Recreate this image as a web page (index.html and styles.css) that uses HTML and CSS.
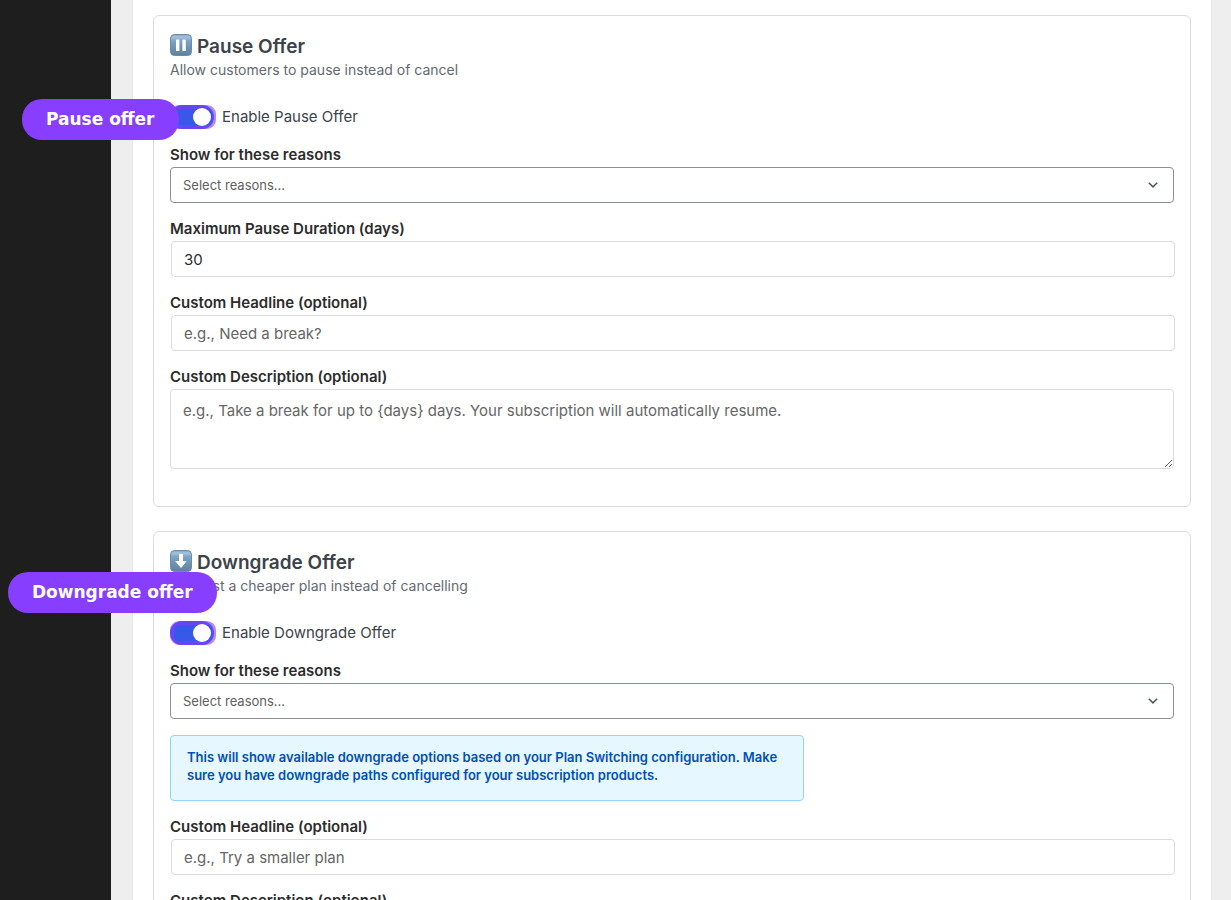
FILE: index.html
```html
<!DOCTYPE html>
<html lang="en">
<head>
    <meta charset="UTF-8">
    <meta name="viewport" content="width=device-width, initial-scale=1.0">
    <title>Retention Offers</title>
    <link rel="stylesheet" href="styles.css">
</head>
<body>
    <div class="layout">
        <aside class="sidebar"></aside>
        <main class="content">
            <form class="panel">
                <section class="offer-card">
                    <span class="callout callout-pause">Pause offer</span>
                    <h2>
                        <svg class="offer-icon" viewBox="0 0 22 22" aria-hidden="true">
                            <defs>
                                <linearGradient id="tile" x1="0" y1="0" x2="0" y2="1">
                                    <stop offset="0" stop-color="#7fa3c4"/>
                                    <stop offset="0.12" stop-color="#a5c4de"/>
                                    <stop offset="0.3" stop-color="#7fa3c3"/>
                                    <stop offset="1" stop-color="#5f7f9e"/>
                                </linearGradient>
                            </defs>
                            <rect x="0.5" y="0.5" width="21" height="21" rx="4" fill="url(#tile)" stroke="#6b8cab"/>
                            <rect x="6" y="5.5" width="3.4" height="11.5" rx="0.6" fill="#fff"/>
                            <rect x="12.4" y="5.5" width="3.4" height="11.5" rx="0.6" fill="#fff"/>
                        </svg>
                        Pause Offer
                    </h2>
                    <p class="offer-text">Allow customers to pause instead of cancel</p>

                    <label class="toggle-row">
                        <input type="checkbox" class="toggle" checked>
                        Enable Pause Offer
                    </label>

                    <div class="field">
                        <label for="pause-reasons">Show for these reasons</label>
                        <div class="select-wrap">
                            <select id="pause-reasons">
                                <option>Select reasons...</option>
                            </select>
                            <svg class="chevron" viewBox="0 0 10 6" aria-hidden="true"><path d="M0.8 0.8 5 4.9 9.2 0.8"/></svg>
                        </div>
                    </div>
                    <div class="field">
                        <label for="pause-days">Maximum Pause Duration (days)</label>
                        <input type="text" inputmode="numeric" class="text-input" id="pause-days" value="30">
                    </div>
                    <div class="field">
                        <label for="pause-headline">Custom Headline (optional)</label>
                        <input type="text" class="text-input" id="pause-headline" placeholder="e.g., Need a break?">
                    </div>
                    <div class="field">
                        <label for="pause-description">Custom Description (optional)</label>
                        <textarea id="pause-description" placeholder="e.g., Take a break for up to {days} days. Your subscription will automatically resume."></textarea>
                    </div>
                </section>

                <section class="offer-card">
                    <span class="callout callout-downgrade">Downgrade offer</span>
                    <h2>
                        <svg class="offer-icon" viewBox="0 0 22 22" aria-hidden="true">
                            <rect x="0.5" y="0.5" width="21" height="21" rx="4" fill="url(#tile)" stroke="#6b8cab"/>
                            <path d="M9 4h4v7h3.8L11 18 5.2 11H9z" fill="#fff"/>
                        </svg>
                        Downgrade Offer
                    </h2>
                    <p class="offer-text">Suggest a cheaper plan instead of cancelling</p>

                    <label class="toggle-row">
                        <input type="checkbox" class="toggle" checked>
                        Enable Downgrade Offer
                    </label>

                    <div class="field">
                        <label for="downgrade-reasons">Show for these reasons</label>
                        <div class="select-wrap">
                            <select id="downgrade-reasons">
                                <option>Select reasons...</option>
                            </select>
                            <svg class="chevron" viewBox="0 0 10 6" aria-hidden="true"><path d="M0.8 0.8 5 4.9 9.2 0.8"/></svg>
                        </div>
                    </div>
                    <p class="notice">This will show available downgrade options based on your Plan Switching configuration. Make sure you have downgrade paths configured for your subscription products.</p>
                    <div class="field">
                        <label for="downgrade-headline">Custom Headline (optional)</label>
                        <input type="text" class="text-input" id="downgrade-headline" placeholder="e.g., Try a smaller plan">
                    </div>
                    <div class="field">
                        <label for="downgrade-description">Custom Description (optional)</label>
                        <textarea id="downgrade-description"></textarea>
                    </div>
                </section>
            </form>
        </main>
    </div>
</body>
</html>
```
FILE: styles.css
```css
* {
    box-sizing: border-box;
}
body {
    margin: 0;
    font-family: Inter, "Liberation Sans", sans-serif;
    font-size: 15px;
    line-height: 20px;
    color: #3c434a;
    background-color: #eee;
}
.layout {
    display: flex;
    height: 100vh;
    overflow: hidden;
}
.sidebar {
    flex: 0 0 111px;
    background-color: #1e1e1e;
}
.content {
    flex: 1;
    padding: 0 20px 0 22px;
}
.panel {
    display: flex;
    flex-direction: column;
    gap: 24px;
    padding: 15px 20px;
    background-color: #fff;
    box-shadow: 0 0 0 1px #e8e8e8;
}
.offer-card {
    position: relative;
    padding: 16px 16px 37px;
    border: 1px solid #dcdcde;
    border-radius: 6px;
}
h2 {
    display: flex;
    align-items: flex-start;
    gap: 5px;
    margin: 0;
    font-size: 19px;
    font-weight: 600;
    line-height: 30px;
}
.offer-icon {
    width: 22px;
    height: 22px;
    margin-top: 2px;
}
.offer-text {
    margin: 0 0 27px;
    font-size: 14px;
    line-height: 16px;
    color: #646970;
}

/* Toggle */
.toggle-row {
    display: flex;
    align-items: center;
    gap: 8px;
    line-height: 24px;
}
.toggle {
    appearance: none;
    position: relative;
    width: 44px;
    height: 24px;
    margin: 0;
    border-radius: 12px;
    background-color: #3858e9;
}
.toggle::before {
    content: "";
    position: absolute;
    inset: 0 -2px 0 0;
    border: 4px solid rgba(131, 56, 255, 0.6);
    border-radius: 9px;
}
.toggle::after {
    content: "";
    position: absolute;
    top: 3px;
    right: 3px;
    width: 18px;
    height: 18px;
    border-radius: 50%;
    background-color: #fff;
}

/* Fields */
.field {
    display: flex;
    flex-direction: column;
    gap: 2px;
    margin-top: 16px;
}
.field label {
    font-weight: 600;
    color: #2c2c2c;
}
.select-wrap {
    position: relative;
}
select,
textarea,
.text-input {
    display: block;
    width: 100%;
    height: 36px;
    margin: 0;
    padding: 0 12px;
    border: 1px solid #dcdcde;
    border-radius: 4px;
    background-color: #fff;
    font-family: inherit;
    font-size: 15px;
    line-height: 20px;
    color: #2c2c2c;
}
select {
    appearance: none;
    border-color: #8c8f94;
    font-size: 13px;
    color: #5f5f5f;
}
.text-input {
    margin: 0 1px;
}
textarea {
    height: 80px;
    padding-top: 11px;
    resize: vertical;
}
::placeholder {
    color: #666;
    opacity: 1;
}
.chevron {
    position: absolute;
    top: 15px;
    right: 16px;
    width: 10px;
    height: 6px;
    fill: none;
    stroke: #50575e;
    stroke-width: 1.5;
    pointer-events: none;
}
.notice {
    max-width: 634px;
    min-height: 66px;
    margin: 16px 0 0;
    padding: 12px 16px;
    border: 1px solid #91d5ff;
    border-radius: 4px;
    background-color: #e6f7ff;
    font-size: 13px;
    font-weight: 600;
    line-height: 18px;
    color: #0050b3;
}

/* Callouts */
.callout {
    position: absolute;
    z-index: 1;
    padding: 10px 24px;
    border-radius: 20px;
    background-color: #873eff;
    font-family: "DejaVu Sans", sans-serif;
    font-size: 17px;
    font-weight: 700;
    line-height: 21px;
    color: #fff;
    white-space: nowrap;
}
.callout-pause {
    top: 83px;
    left: -132px;
}
.callout-downgrade {
    top: 40px;
    left: -146px;
}
```
